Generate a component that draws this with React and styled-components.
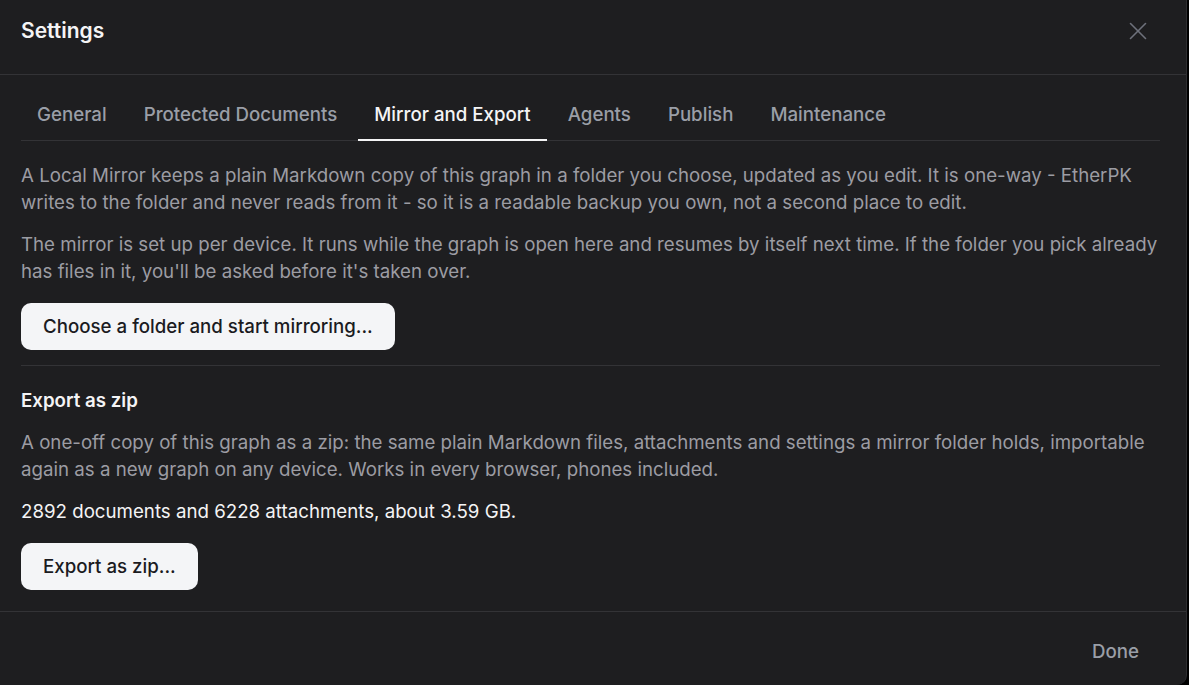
import styled, { createGlobalStyle } from "styled-components";
import { X } from "lucide-react";

const GlobalStyle = createGlobalStyle`
  html, body {
    margin: 0;
    background: #000;
  }
  body {
    font-family: Inter, "Noto Sans", "Liberation Sans", sans-serif;
    -webkit-font-smoothing: antialiased;
  }
`

const Dialog = styled.div`
  width: 1187px;
  height: 685px;
  box-sizing: border-box;
  background: #1e1e20;
  border-right: 1px solid #2e2e31;
  border-bottom-right-radius: 10px;
  display: flex;
  flex-direction: column;
  overflow: hidden;
`

const Header = styled.div`
  height: 75px;
  box-sizing: border-box;
  display: flex;
  align-items: center;
  justify-content: space-between;
  padding: 0 28px 13px 21px;
  border-bottom: 1px solid #333336;
`

const Title = styled.h2`
  margin: 0;
  font-size: 21px;
  font-weight: 600;
  color: #f4f4f5;
`

const CloseButton = styled.button`
  width: 40px;
  height: 40px;
  display: flex;
  align-items: center;
  justify-content: center;
  background: transparent;
  border: none;
  padding: 0;
  color: #6e717b;
  cursor: pointer;
`

const Body = styled.div`
  flex: 1;
  padding: 0 26px 0 21px;
`

const Tabs = styled.div`
  display: flex;
  gap: 5px;
  border-bottom: 1px solid #333336;
  margin-top: 12px;
`

const Tab = styled.button`
  background: transparent;
  border: none;
  font-family: inherit;
  font-size: 18.7px;
  line-height: 24px;
  font-weight: 500;
  padding: 16px 16px 12px;
  margin-bottom: -1px;
  color: ${({ $active }) => ($active ? "#f4f4f5" : "#9a9ea7")};
  border-bottom: 2px solid ${({ $active }) => ($active ? "#f4f4f5" : "transparent")};
  cursor: pointer;
`

const Section = styled.div`
  padding: 21px 0 15px;
  border-bottom: ${({ $last }) => ($last ? "none" : "1px solid #333336")};
`

const Text = styled.p`
  margin: 0 0 15px;
  font-size: 18.7px;
  line-height: 27px;
  color: ${({ $bright }) => ($bright ? "#f4f4f5" : "#9c9ca3")};
`

const Heading = styled.h3`
  margin: 0 0 15px;
  font-size: 18.7px;
  line-height: 27px;
  font-weight: 600;
  color: #f4f4f5;
`

const LightButton = styled.button`
  height: 47px;
  padding: 0 22px;
  margin-top: 3px;
  border: none;
  border-radius: 10px;
  background: #f4f5f7;
  color: #1b1b1f;
  font-family: inherit;
  font-size: 18.7px;
  font-weight: 500;
  cursor: pointer;
`

const Footer = styled.div`
  height: 74px;
  box-sizing: border-box;
  border-top: 1px solid #333336;
  display: flex;
  align-items: center;
  justify-content: flex-end;
  padding: 6px 37px 0 0;
`

const TextButton = styled.button`
  background: transparent;
  border: none;
  font-family: inherit;
  font-size: 18.7px;
  font-weight: 500;
  color: #9a9ea7;
  padding: 8px 10px;
  cursor: pointer;
`

const tabs = ["General", "Protected Documents", "Mirror and Export", "Agents", "Publish", "Maintenance"]

const App = () => {
  return (
    <>
      <GlobalStyle />
      <Dialog>
        <Header>
          <Title>Settings</Title>
          <CloseButton><X size={30} strokeWidth={1.3} /></CloseButton>
        </Header>
        <Body>
          <Tabs>
            {tabs.map((t) => (
              <Tab key={t} $active={t === "Mirror and Export"}>{t}</Tab>
            ))}
          </Tabs>
          <Section>
            <Text>
              A Local Mirror keeps a plain Markdown copy of this graph in a folder you choose, updated as you edit. It is one-way - EtherPK writes to the folder and never reads from it - so it is a readable backup you own, not a second place to edit.
            </Text>
            <Text>
              The mirror is set up per device. It runs while the graph is open here and resumes by itself next time. If the folder you pick already has files in it, you'll be asked before it's taken over.
            </Text>
            <LightButton>Choose a folder and start mirroring...</LightButton>
          </Section>
          <Section $last>
            <Heading>Export as zip</Heading>
            <Text>
              A one-off copy of this graph as a zip: the same plain Markdown files, attachments and settings a mirror folder holds, importable again as a new graph on any device. Works in every browser, phones included.
            </Text>
            <Text $bright>2892 documents and 6228 attachments, about 3.59 GB.</Text>
            <LightButton>Export as zip...</LightButton>
          </Section>
        </Body>
        <Footer>
          <TextButton>Done</TextButton>
        </Footer>
      </Dialog>
    </>
  )
}

export default App
